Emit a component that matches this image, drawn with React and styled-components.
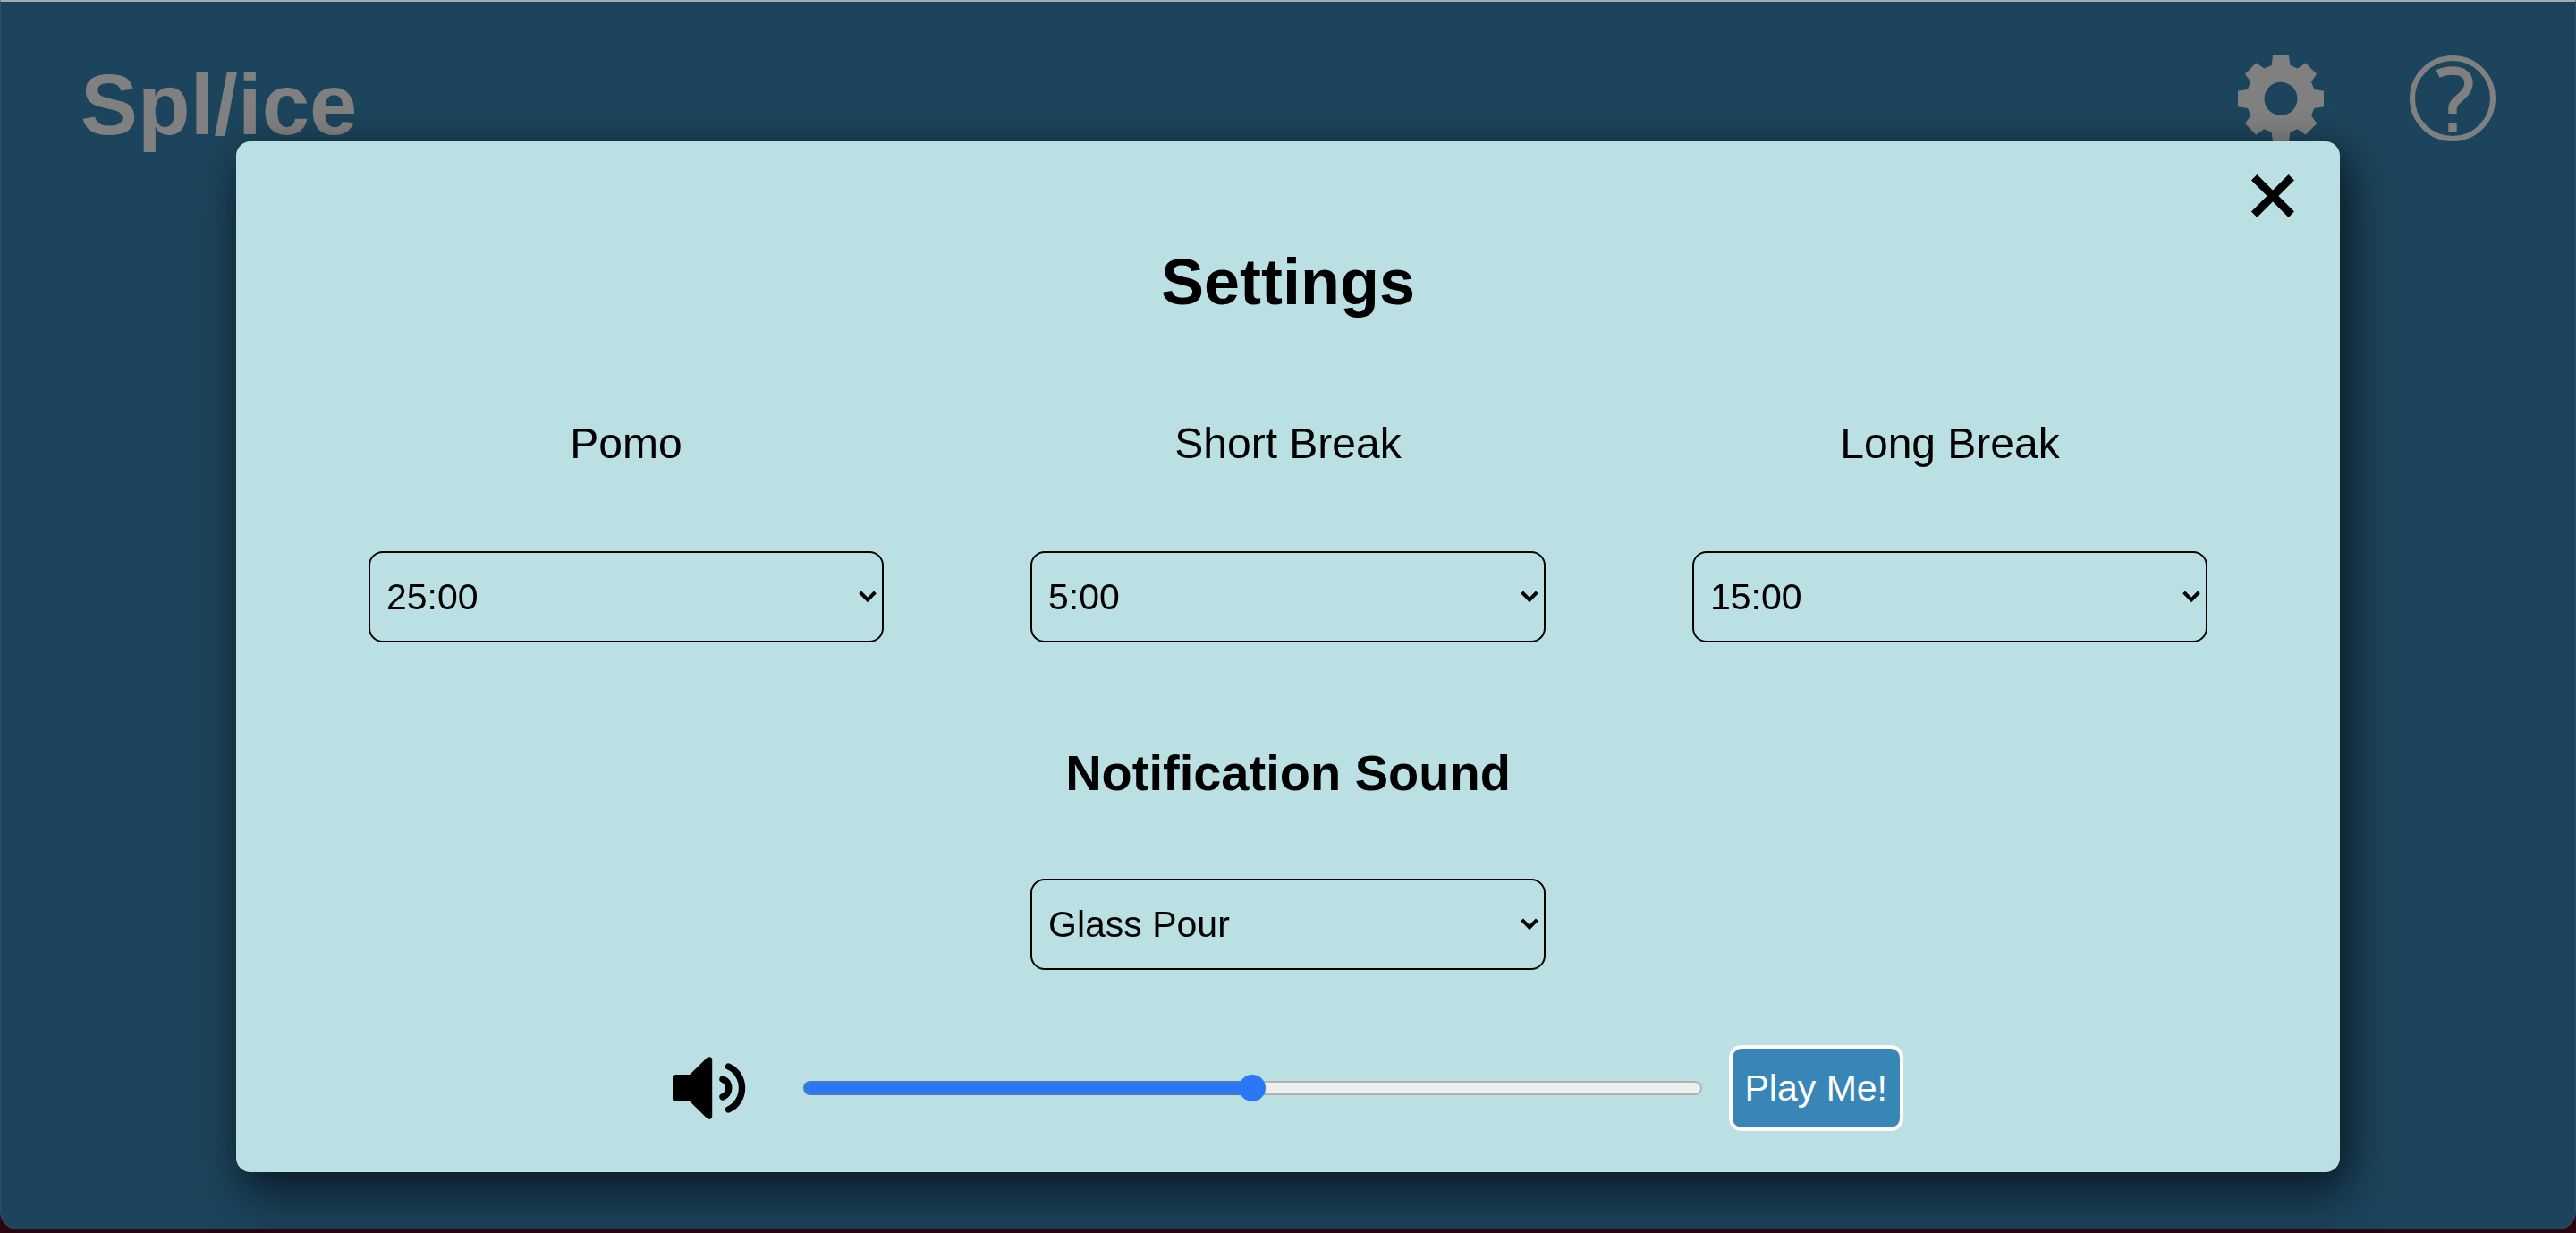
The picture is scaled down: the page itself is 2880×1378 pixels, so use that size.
import React, { useState } from "react";
import styled, { createGlobalStyle } from "styled-components";

const GlobalStyle = createGlobalStyle`
  *, *::before, *::after { box-sizing: border-box; }
  body {
    margin: 0;
    background: #2c060e;
    color: #000;
    font-family: Helvetica, "Liberation Sans", Arial, sans-serif;
  }
`;

const Page = styled.div`
  display: flex;
  min-height: 100vh;
  padding-bottom: 4px;
`;

const Screen = styled.div`
  flex: 1;
  background: #1c445c;
  border: 2px solid #2b526b;
  border-top-color: #a8abab;
  border-width: 2px 1px 1px;
  border-radius: 0 0 20px 20px;
`;

const Header = styled.header`
  display: flex;
  justify-content: space-between;
  align-items: flex-start;
  padding: 60px 89px 0;
`;

const Logo = styled.h1`
  margin: 0;
  color: #808080;
  font-size: 96px;
  line-height: 110px;
`;

const HeaderActions = styled.nav`
  display: flex;
  gap: 96px;
`;

const IconButton = styled.button`
  display: block;
  padding: 0;
  border: 0;
  background: none;
  color: ${(p) => p.$color};
  cursor: pointer;

  svg { display: block; }
`;

const Overlay = styled.div`
  position: fixed;
  inset: 0;
  display: flex;
  align-items: flex-start;
  padding: 158px 264px 68px;
`;

const Modal = styled.section`
  flex: 1;
  display: flex;
  flex-direction: column;
  align-items: center;
  padding: 37px 51px 46px;
  border-radius: 16px;
  background: #bae0e4;
  box-shadow: 8px 8px 40px rgba(0, 0, 0, 0.4), 8px 32px 56px rgba(4, 4, 16, 0.4);
`;

const CloseRow = styled.div`
  align-self: stretch;
  display: flex;
  justify-content: flex-end;
`;

const Title = styled.h2`
  margin: 31px 0 0;
  font-size: 72px;
  line-height: 82px;
`;

const Timers = styled.div`
  align-self: stretch;
  display: grid;
  grid-template-columns: repeat(3, 1fr);
  padding: 0 15px;
  margin-top: 112px;
`;

const Field = styled.div`
  display: flex;
  flex-direction: column;
  align-items: center;
  gap: 92px;
`;

const Label = styled.label`
  font-size: 48px;
  line-height: 56px;
`;

const SelectBox = styled.div`
  display: grid;
  align-items: center;
  width: 20vw;

  > * { grid-area: 1 / 1; }
  > svg { justify-self: end; margin-right: 8px; pointer-events: none; }
`;

const Select = styled.select`
  appearance: none;
  width: 100%;
  height: 102px;
  padding: 0 48px 0 18px;
  border: 2px solid #000;
  border-radius: 16px;
  background: transparent;
  color: #000;
  font-family: Arial, "Liberation Sans", sans-serif;
  font-size: 41px;
`;

const SoundLabel = styled.label`
  margin: 114px 0 86px;
  font-size: 56px;
  font-weight: 700;
  line-height: 64px;
`;

const VolumeRow = styled.div`
  display: flex;
  align-items: center;
  width: 100%;
  max-width: 1376px;
  margin-top: 84px;
`;

const Slider = styled.input`
  --fill: #2a78f8;
  appearance: none;
  flex: 1;
  min-width: 0;
  height: 32px;
  margin: 0 30px 0 64px;
  background: none;

  &::-webkit-slider-runnable-track {
    height: 16px;
    border: 2px solid transparent;
    border-radius: 8px;
    background:
      linear-gradient(to right, var(--fill) var(--level), #efefef var(--level)) padding-box,
      linear-gradient(to right, #4a78c4 var(--level), #b2b2b2 var(--level)) border-box;
  }

  &::-webkit-slider-thumb {
    appearance: none;
    width: 30px;
    height: 30px;
    margin-top: -9px;
    border-radius: 50%;
    background: var(--fill);
  }
`;

const PlayButton = styled.button`
  height: 96px;
  padding: 0 14px;
  border: 4px solid #fff;
  border-radius: 14px;
  background: #3885b7;
  color: #fff;
  font-family: Arial, "Liberation Sans", sans-serif;
  font-size: 41px;
  cursor: pointer;
`;

function GearIcon() {
  return (
    <svg width="96" height="96" viewBox="0 0 96 96" fill="currentColor" aria-hidden="true">
      <path
        fillRule="evenodd"
        d="M39 0H57L58.4 11L66.7 14.4L75.7 8.3L88 20.7L82 29.5L85.3 38L96 39.7V57.3L85.3 59L82 67.3L88.3 76L75.7 88.7L66.7 82.3L58.4 85.7L57 96H39L37.7 85.7L29.3 82.3L20.3 88.7L8 76L14.3 67.3L11 59L0 57.3V39.7L11 38L14.3 29.5L8 20.7L20.3 8.3L29.3 14.4L37.7 11ZM48 29.8A18.5 18.5 0 1 0 48 66.8A18.5 18.5 0 1 0 48 29.8Z"
      />
    </svg>
  );
}

function HelpIcon() {
  return (
    <svg width="96" height="96" viewBox="0 0 96 96" fill="none" stroke="currentColor" aria-hidden="true">
      <circle cx="48" cy="48" r="45" strokeWidth="6" />
      <path
        d="M31.5 20.5C37 18 42 17 48 17C59 17 66 22 66 31C66 37 63 41 58 45.5L53 50C49 53.5 48 55.5 48 59V65M48 75V85"
        strokeWidth="9.4"
      />
    </svg>
  );
}

function CloseIcon() {
  return (
    <svg width="48" height="48" viewBox="0 0 48 48" stroke="currentColor" strokeWidth="9" aria-hidden="true">
      <path d="M3.2 3.2L44.8 44.8M44.8 3.2L3.2 44.8" />
    </svg>
  );
}

function ChevronIcon() {
  return (
    <svg width="20" height="14" viewBox="0 0 20 14" fill="none" stroke="#000" strokeWidth="4" aria-hidden="true">
      <path d="M1.6 1.8L10 10.4L18.4 1.8" />
    </svg>
  );
}

function VolumeIcon() {
  return (
    <svg width="82" height="70" viewBox="0 0 82 70" fill="none" aria-hidden="true">
      <path
        fill="#000"
        d="M3 20H19L37.5 2C39.5 -0.6 44.2 -0.4 44.2 3V67C44.2 70.4 39.5 70.6 37.5 68L19 49.7H3Q0 49.7 0 46.7V23Q0 20 3 20Z"
      />
      <path
        stroke="#000"
        strokeWidth="7.4"
        strokeLinecap="round"
        d="M56 25C65 29 65 41 56 45M62.5 11C82.5 20 82.5 50 62.5 59"
      />
    </svg>
  );
}

function Dropdown({ id, options }) {
  return (
    <SelectBox>
      <Select id={id}>
        {options.map((option) => (
          <option key={option}>{option}</option>
        ))}
      </Select>
      <ChevronIcon />
    </SelectBox>
  );
}

const timers = [
  { id: "pomo", label: "Pomo", options: ["25:00"] },
  { id: "short-break", label: "Short Break", options: ["5:00"] },
  { id: "long-break", label: "Long Break", options: ["15:00"] },
];

export default function App() {
  const [volume, setVolume] = useState(50);

  return (
    <>
      <GlobalStyle />
      <Page>
        <Screen>
          <Header>
            <Logo>Spl/ice</Logo>
            <HeaderActions>
              <IconButton type="button" aria-label="Settings" $color="#808080">
                <GearIcon />
              </IconButton>
              <IconButton type="button" aria-label="Help" $color="#808080">
                <HelpIcon />
              </IconButton>
            </HeaderActions>
          </Header>
        </Screen>
      </Page>
      <Overlay>
        <Modal role="dialog" aria-labelledby="settings-title">
          <CloseRow>
            <IconButton type="button" aria-label="Close" $color="#000">
              <CloseIcon />
            </IconButton>
          </CloseRow>
          <Title id="settings-title">Settings</Title>
          <Timers>
            {timers.map((timer) => (
              <Field key={timer.id}>
                <Label htmlFor={timer.id}>{timer.label}</Label>
                <Dropdown id={timer.id} options={timer.options} />
              </Field>
            ))}
          </Timers>
          <SoundLabel htmlFor="sound">Notification Sound</SoundLabel>
          <Dropdown id="sound" options={["Glass Pour"]} />
          <VolumeRow>
            <VolumeIcon />
            <Slider
              type="range"
              aria-label="Volume"
              min="0"
              max="100"
              value={volume}
              onChange={(e) => setVolume(Number(e.target.value))}
              style={{ "--level": `${volume}%` }}
            />
            <PlayButton type="button">Play Me!</PlayButton>
          </VolumeRow>
        </Modal>
      </Overlay>
    </>
  );
}
